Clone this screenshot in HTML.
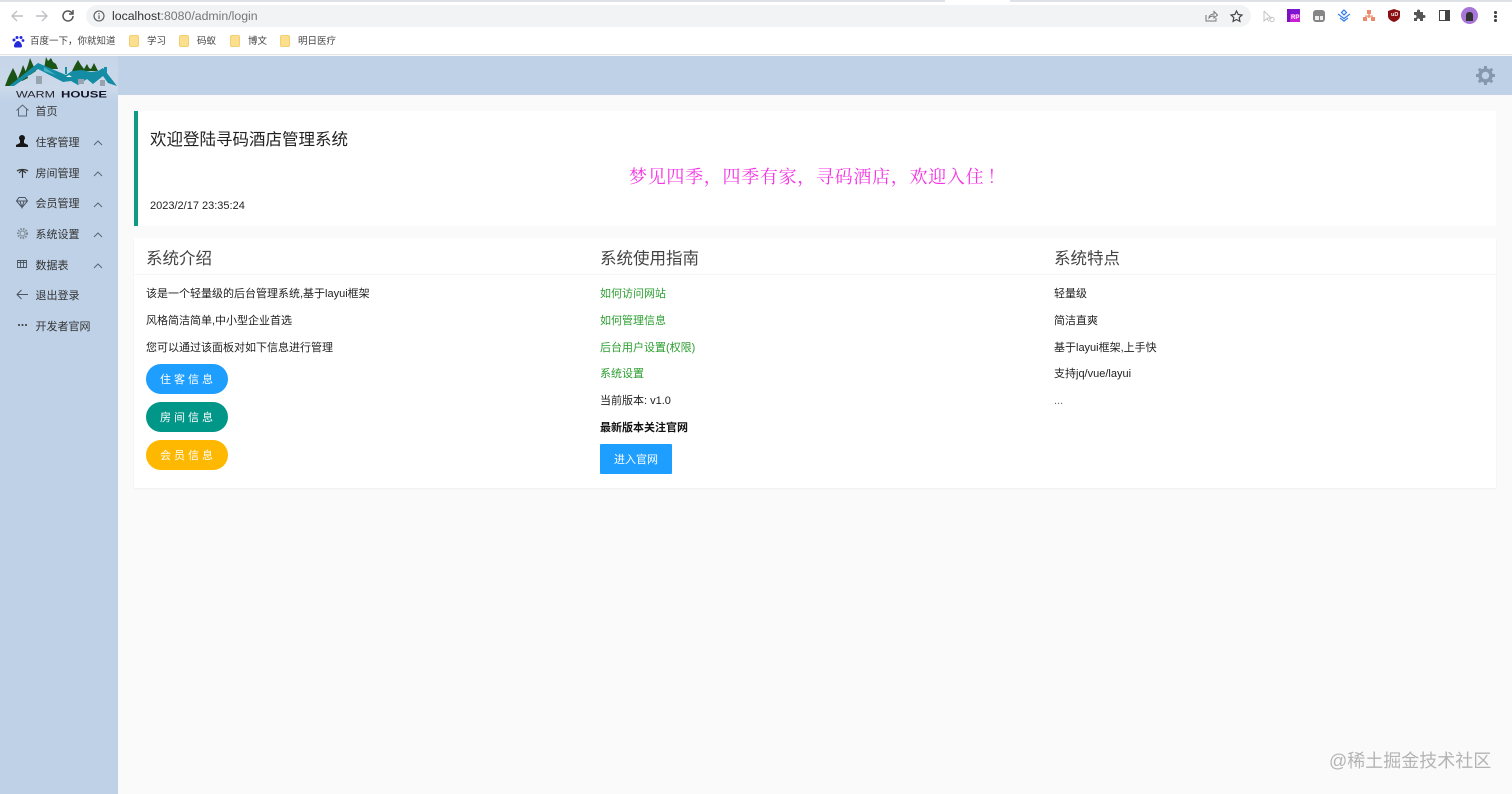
<!DOCTYPE html>
<html lang="zh"><head><meta charset="utf-8"><title>寻码酒店管理系统</title>
<style>
*{box-sizing:border-box}
html,body{margin:0;padding:0;width:1512px;height:794px;overflow:hidden;background:#fafafa;font-family:"Liberation Sans","Noto Sans CJK SC",sans-serif;color:#222}
.a{position:absolute;white-space:nowrap}
.t{font-size:11px;line-height:16px;color:#222}
.h{font-size:16.5px;line-height:22px;color:#444}
.m{font-size:11px;line-height:16px;left:35.5px;color:#333}
.g{color:#2a9d2f}
.b{left:146px;width:82px;height:30px;border-radius:15px;color:#fff;font-size:11px;line-height:32px;text-align:center;letter-spacing:3px;padding-left:2px}
.bm{top:35px;font-size:9.5px;line-height:14px;color:#444}
.f{top:35px;width:10px;height:12px;background:#fbdf8f;border:1px solid #f3cf6f;border-radius:2px}
svg{position:absolute;overflow:visible}
</style></head><body>
<!-- browser chrome -->
<div class="a" style="left:0;top:0;width:1512px;height:55px;background:#fff;border-bottom:1px solid #e4e4e4"></div>
<div class="a" style="left:0;top:0;width:945px;height:2px;background:#dee1e6"></div>
<div class="a" style="left:1010px;top:0;width:502px;height:2px;background:#dee1e6"></div>
<div class="a" style="left:86px;top:5px;width:1165px;height:22px;border-radius:11px;background:#f1f3f4"></div>
<svg style="left:10px;top:9px" width="14" height="14" fill="none" stroke="#bcc0c4" stroke-width="1.4"><path d="M13 7H2M7 2L2 7l5 5"/></svg>
<svg style="left:35px;top:9px" width="14" height="14" fill="none" stroke="#bcc0c4" stroke-width="1.4"><path d="M1 7h11M7 2l5 5-5 5"/></svg>
<svg style="left:61px;top:9px" width="14" height="14" fill="none" stroke="#555" stroke-width="1.5"><path d="M12 7a5 5 0 1 1-1.5-3.6L12 5M12 1v4H8"/></svg>
<svg style="left:93px;top:10px" width="12" height="12" fill="none" stroke="#555" stroke-width="1.1"><circle cx="6" cy="6" r="5"/><path d="M6 5.200V9M6 3v1.300"/></svg>
<div class="a" style="left:112px;top:8px;font-size:12.3px;line-height:16px;color:#777"><span style="color:#333">localhost</span>:8080/admin/login</div>
<svg style="left:1205px;top:10px" width="13" height="12" fill="none" stroke="#777" stroke-width="1"><path d="M1 5v6h10V8M4 8c0-3 3-4 5-4V1.500l3.500 3.500L9 8V6c-2 0-4 .5-5 2z"/></svg>
<svg style="left:1230px;top:10px" width="13" height="12" fill="none" stroke="#444" stroke-width="1.200"><path d="M6.500 1l1.700 3.500 3.800.5-2.800 2.600.7 3.800-3.400-1.900-3.400 1.900.7-3.800L1 5l3.800-.5z"/></svg>
<svg style="left:1263px;top:10px" width="12" height="14" fill="none" stroke="#c4c4c4" stroke-width="1"><path d="M1 1v10l3-2.500 2 3M1 1l7 7H4.500"/><circle cx="9" cy="9.500" r="2.200"/></svg>
<div class="a" style="left:1287px;top:9px;width:13px;height:13px;background:#c71fd6"></div>
<div class="a" style="left:1287px;top:9px;width:3px;height:13px;background:#7a10c0"></div>
<div class="a" style="left:1290px;top:9px;width:10px;height:5px;background:#7d16d0"></div>
<div class="a" style="left:1291px;top:15px;font-size:6px;line-height:7px;color:#fff;font-weight:700">RP</div>
<div class="a" style="left:1313px;top:10px;width:12px;height:12px;border-radius:3px;background:#858585"></div>
<div class="a" style="left:1315px;top:16px;width:3.500px;height:4px;background:#eee"></div>
<div class="a" style="left:1319.500px;top:16px;width:3.500px;height:4px;background:#eee"></div>
<svg style="left:1337px;top:9px" width="14" height="13" fill="none" stroke="#3b82e8" stroke-width="1.300"><path d="M7 1L4.500 3.500 7 6l2.500-2.500zM1 5l6 4.500L13 5M3 9l4 3 4-3"/></svg>
<svg style="left:1363px;top:10px" width="12" height="12" fill="#ee8a6b"><rect x="4" y="0" width="4" height="4"/><rect x="0" y="7" width="4" height="4"/><rect x="8" y="7" width="4" height="4"/><rect x="5.300" y="3" width="1.400" height="5"/><rect x="2" y="5.500" width="8" height="1.200"/></svg>
<svg style="left:1388px;top:9px" width="12" height="13"><path d="M6 0l6 2v5c0 3-3 5-6 6-3-1-6-3-6-6V2z" fill="#8c0f14"/></svg>
<div class="a" style="left:1391px;top:12px;font-size:5.500px;line-height:6px;color:#eee;font-weight:700">uD</div>
<svg style="left:1413px;top:9px" width="12" height="12" fill="#555"><path d="M1 3h3V2a1.500 1.500 0 0 1 3 0v1h3v3h1a1.500 1.500 0 0 1 0 3h-1v3H7v-1a1.500 1.500 0 0 0-3 0v1H1V9h1a1.500 1.500 0 0 0 0-3H1z"/></svg>
<div class="a" style="left:1439px;top:10px;width:11px;height:11px;border:1.500px solid #444;border-right-width:5px"></div>
<div class="a" style="left:1461px;top:7px;width:17px;height:17px;border-radius:50%;background:#a876d8"></div>
<div class="a" style="left:1466px;top:12px;width:7px;height:9px;border-radius:3px 3px 0 0;background:#333"></div>
<div class="a" style="left:1494px;top:11px;width:2.500px;height:2.500px;border-radius:50%;background:#444;box-shadow:0 4px 0 #444,0 8px 0 #444"></div>
<!-- bookmarks -->
<svg style="left:11px;top:35px" width="13" height="13" fill="#2529d8"><circle cx="3" cy="5" r="1.500"/><circle cx="6" cy="2.500" r="1.500"/><circle cx="10" cy="2.500" r="1.500"/><circle cx="12" cy="5.500" r="1.400"/><path d="M7 6c2 0 4 3 4 5 0 2-2 1.500-4 1.500S3 13 3 11c0-2 2-5 4-5z"/></svg>
<div class="a bm" style="left:30px">百度一下，你就知道</div>
<div class="a f" style="left:129px"></div><div class="a bm" style="left:147px">学习</div>
<div class="a f" style="left:179px"></div><div class="a bm" style="left:197px">码蚁</div>
<div class="a f" style="left:230px"></div><div class="a bm" style="left:248px">博文</div>
<div class="a f" style="left:280px"></div><div class="a bm" style="left:298px">明日医疗</div>
<!-- admin header/sidebar -->
<div class="a" style="left:0;top:56px;width:1512px;height:39px;background:#bfd1e7"></div>
<div class="a" style="left:0;top:56px;width:118px;height:738px;background:#bfd1e7"></div>
<div class="a" style="left:0;top:56px;width:118px;height:46px;background:linear-gradient(180deg,#c6d5e8,#cbd9ea 70%,#bfd1e7)"></div>
<svg style="left:1475px;top:65px" width="21" height="21" viewBox="0 0 21 21" fill="none" stroke="#8797ac"><circle cx="10.500" cy="10.500" r="5.500" stroke-width="3.500"/><path d="M10.500 1v3M10.500 17v3M1 10.500h3M17 10.500h3M3.800 3.800l2.100 2.100M15.100 15.100l2.100 2.100M3.800 17.200l2.100-2.100M15.100 5.900l2.100-2.100" stroke-width="3"/></svg>
<!-- logo -->
<svg style="left:0;top:55px" width="125" height="48" viewBox="0 0 125 48">
<g fill="#1b5415">
<path d="M13 13l3 6 2 5 3 2-9 5H5l3-8z"/>
<path d="M23 10l3 7 2 6-6 3-4-3 3-7z"/>
<path d="M30 3l3 7 3 6-6 4-5-2 3-8z"/>
<path d="M46 2l2 4 3-3 2 4 3 2 2 5H44z"/>
<path d="M78 5l3 5 3 4 3-5 2 4 2 1 3-6 4 8H72l3-6z"/>
</g>
<path d="M38 8l28 12 6-4 10-1 9 2 7-1 5-3 14 18-9-3-5-7-10 8-6-5-9 6-7-4-8 1L38 14 14 31H9z" fill="#138ca4"/>
<path d="M44 12l12 8-12-4z" fill="#4ab3c6"/>
<path d="M65 12h2v7h-2zM104 12h3v6h-3z" fill="#1491a8"/>
<path d="M66 22l3-2 3 2z" fill="#f0f6f8"/>
<g fill="#97a3af"><rect x="36" y="21" width="6" height="8"/><rect x="78" y="24" width="6" height="5"/><rect x="100" y="25" width="5" height="6"/></g>
<text x="16" y="42.500" font-family="Liberation Sans,sans-serif" font-size="9.500" fill="#23232b" textLength="39" lengthAdjust="spacingAndGlyphs">WARM</text>
<text x="61" y="42.500" font-family="Liberation Sans,sans-serif" font-size="9.500" font-weight="700" fill="#14142a" textLength="46" lengthAdjust="spacingAndGlyphs">HOUSE</text>
</svg>
<!-- sidebar menu -->
<svg style="left:16px;top:104px" width="13" height="13" fill="none" stroke="#5b6675"><path d="M.5 6.500L6.500 1l6 5.500M2.500 5v7h8V5"/></svg>
<div class="a m" style="top:104px">首页</div>
<svg style="left:16px;top:135px" width="12" height="12" fill="#161616"><circle cx="6" cy="3" r="3"/><path d="M4 5h4v3l4 2v2H0v-2l4-2z"/></svg>
<div class="a m" style="top:135px">住客管理</div>
<svg style="left:17px;top:168px" width="11" height="10" fill="none" stroke="#333" stroke-width="1.200"><path d="M0 3c3-2 8-2 11 0M5.500 2v8M2 5l3-3 4 3"/></svg>
<div class="a m" style="top:166px">房间管理</div>
<svg style="left:16px;top:197px" width="12" height="11" fill="none" stroke="#4b5562"><path d="M3 .5h6L11.500 4 6 10.500.5 4zM.5 4h11M4 4l2 6.500L8 4"/></svg>
<div class="a m" style="top:196px">会员管理</div>
<svg style="left:17px;top:228px" width="11" height="11" fill="none" stroke="#7d8894" stroke-width="1"><circle cx="5.500" cy="5.500" r="2.500"/><circle cx="5.500" cy="5.500" r="4.500" stroke-dasharray="1.500 1.200" stroke-width="2"/></svg>
<div class="a m" style="top:227px">系统设置</div>
<svg style="left:17px;top:260px" width="10" height="8" fill="none" stroke="#4b5562" stroke-width=".9"><path d="M.5.500h9v7h-9zM.5 2.500h9M3.500.500v7M6.500.500v7"/></svg>
<div class="a m" style="top:258px">数据表</div>
<svg style="left:16px;top:289px" width="12" height="11" fill="none" stroke="#4b5562"><path d="M12 5.500H1M5.500 1L1 5.500 5.500 10"/></svg>
<div class="a m" style="top:288px">退出登录</div>
<div class="a" style="left:18px;top:324px;width:2px;height:2px;border-radius:50%;background:#333;box-shadow:3.500px 0 0 #333,7px 0 0 #333"></div>
<div class="a m" style="top:319px">开发者官网</div>
<svg style="left:93px;top:139px" width="10" height="128" fill="none" stroke="#5c6675"><path d="M1 6l4-4 4 4M1 37l4-4 4 4M1 68l4-4 4 4M1 98l4-4 4 4M1 129l4-4 4 4"/></svg>
<!-- welcome card -->
<div class="a" style="left:134px;top:111px;width:1362px;height:115px;background:#fff;border-left:4px solid #0f9a86"></div>
<div class="a" style="left:150px;top:129px;font-size:16.500px;line-height:22px;color:#222">欢迎登陆寻码酒店管理系统</div>
<div class="a" style="left:629px;top:165px;font-family:'Liberation Serif','Noto Serif CJK SC',serif;font-size:18px;line-height:24px;letter-spacing:.7px;color:#f534e4">梦见四季，四季有家，寻码酒店，欢迎入住<span style="position:relative;left:3px">！</span></div>
<div class="a t" style="left:150px;top:198px">2023/2/17 23:35:24</div>
<!-- info card -->
<div class="a" style="left:134px;top:238px;width:1362px;height:250px;background:#fff;box-shadow:0 1px 2px rgba(0,0,0,.05)"></div>
<div class="a" style="left:134px;top:274px;width:1362px;height:1px;background:#f6f6f6"></div>
<div class="a h" style="left:146px;top:248px">系统介绍</div>
<div class="a t" style="left:146px;top:286px">该是一个轻量级的后台管理系统,基于layui框架</div>
<div class="a t" style="left:146px;top:313px">风格简洁简单,中小型企业首选</div>
<div class="a t" style="left:146px;top:340px">您可以通过该面板对如下信息进行管理</div>
<div class="a b" style="top:364px;background:#1e9fff">住客信息</div>
<div class="a b" style="top:402px;background:#009688">房间信息</div>
<div class="a b" style="top:440px;background:#ffb800">会员信息</div>
<div class="a h" style="left:600px;top:248px">系统使用指南</div>
<div class="a t g" style="left:600px;top:286px">如何访问网站</div>
<div class="a t g" style="left:600px;top:313px">如何管理信息</div>
<div class="a t g" style="left:600px;top:340px">后台用户设置(权限)</div>
<div class="a t g" style="left:600px;top:366px">系统设置</div>
<div class="a t" style="left:600px;top:393px">当前版本: v1.0</div>
<div class="a t" style="left:600px;top:420px;font-weight:700;color:#111">最新版本关注官网</div>
<div class="a" style="left:600px;top:444px;width:72px;height:30px;background:#1e9fff;border-radius:1px;color:#fff;font-size:11px;line-height:32px;text-align:center">进入官网</div>
<div class="a h" style="left:1054px;top:248px">系统特点</div>
<div class="a t" style="left:1054px;top:286px">轻量级</div>
<div class="a t" style="left:1054px;top:313px">简洁直爽</div>
<div class="a t" style="left:1054px;top:340px">基于layui框架,上手快</div>
<div class="a t" style="left:1054px;top:366px">支持jq/vue/layui</div>
<div class="a t" style="left:1054px;top:393px;color:#666">...</div>
<!-- watermark -->
<div class="a" style="left:1329px;top:749px;font-size:18px;line-height:24px;color:#b4b4b4">@稀土掘金技术社区</div>
</body></html>
